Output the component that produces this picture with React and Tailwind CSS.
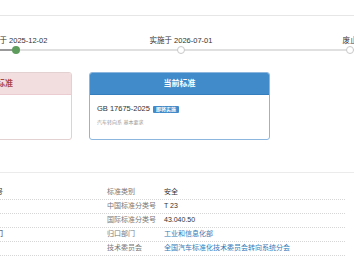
import React from "react"

const rows = [
  { l1: "标准号", v1: "强制性标准编号", l2: "标准类别", v2: "安全" },
  { l1: "标准性质", v1: "强制性", l2: "中国标准分类号", v2: "T 23" },
  { l1: "标准状态", v1: "即将实施", l2: "国际标准分类号", v2: "43.040.50" },
  { l1: "主管部门", v1: "标准化行政部门", l2: "归口部门", v2: "工业和信息化部", link: true },
  { l1: "起草单位", v1: "—", l2: "技术委员会", v2: "全国汽车标准化技术委员会转向系统分会", link: true },
]

const Step = ({ label, done, className = "" }) => (
  <div className={"w-[80px] shrink-0 flex flex-col items-center " + className}>
    <span className="whitespace-nowrap text-[7.5px] leading-[10px]">{label}</span>
    <span
      className={
        done
          ? "w-[8px] h-[8px] rounded-full bg-[#5e9c5e]"
          : "w-[8px] h-[8px] rounded-full bg-white border border-[#c8c8c8]"
      }
    />
  </div>
)

const App = () => {
  return (
    <div className="w-[354px] h-[266px] overflow-hidden bg-white text-[#333] font-['Liberation_Sans','Noto_Sans_CJK_SC',sans-serif]">
      <div className="h-[16px] border-b border-[#e6e6e6]" />

      {/* timeline */}
      <div className="relative pt-[20px] h-[44px]">
        <div className="absolute left-0 right-0 top-[33px] h-[2px] bg-[#e0e0e0]" />
        <div className="absolute left-0 w-[16px] top-[33px] h-[2px] bg-[#9a9a9a]" />
        <div className="relative flex ml-[-24px] gap-[85px]">
          <Step label="发布于 2025-12-02" done />
          <Step label="实施于 2026-07-01" />
          <Step label="废止" className="ml-[4px]" />
        </div>
      </div>

      {/* cards */}
      <div className="mt-[12px] ml-[-86px] flex gap-[17px]">
        <div className="w-[158px] h-[68px] shrink-0 rounded-[3px] border border-[#e3d0d0] overflow-hidden">
          <div className="h-[22px] bg-[#f2dede] border-b border-[#ebccd1] flex items-center justify-center text-[8px] font-bold text-[#a94442]">
            被代替标准
          </div>
        </div>

        <div className="w-[181px] h-[68px] shrink-0 rounded-[3px] border border-[#8cb6de] overflow-hidden">
          <div className="h-[22px] bg-[#428bca] border-b border-[#357ebd] flex items-center justify-center text-[8px] font-bold text-white">
            当前标准
          </div>
          <div className="pl-[7px] pt-[9px]">
            <div className="flex items-center gap-[3px]">
              <span className="text-[7.5px] leading-[10px]">GB 17675-2025</span>
              <span className="bg-[#428bca] text-white text-[5px] leading-[7px] font-bold px-[3px] rounded-[1px]">
                即将实施
              </span>
            </div>
            <div className="mt-[5px] text-[5px] leading-[7px] text-[#999]">汽车转向系 基本要求</div>
          </div>
        </div>
      </div>

      <div className="mt-[32px] h-px bg-[#ebebeb]" />

      {/* info table */}
      <div className="mt-[13px] ml-[-103px] w-[448px] text-[7px]">
        {rows.map((r) => (
          <div
            key={r.l2}
            className="grid grid-cols-[57px_153px_57px_181px] h-[14px] items-center border-b border-dotted border-[#d6d6d6] whitespace-nowrap"
          >
            <span className="text-[#777]">{r.l1}</span>
            <span>{r.v1}</span>
            <span className="text-[#777]">{r.l2}</span>
            <span className={r.link ? "text-[#337ab7]" : ""}>{r.v2}</span>
          </div>
        ))}
      </div>
    </div>
  )
}

export default App
